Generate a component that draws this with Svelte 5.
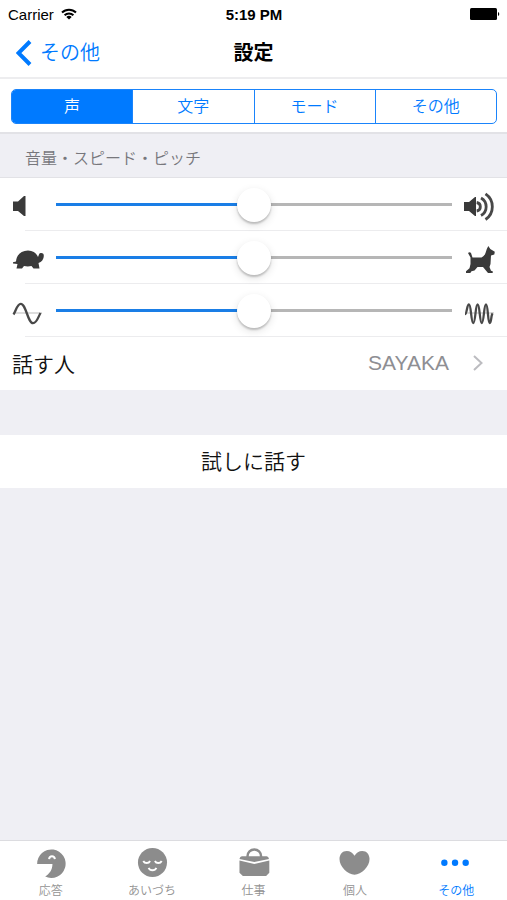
<script lang="ts">
	const segments = ["声", "文字", "モード", "その他"];

	const tabs = [
		{ icon: "reply", label: "応答" },
		{ icon: "nod", label: "あいづち" },
		{ icon: "work", label: "仕事" },
		{ icon: "heart", label: "個人" },
		{ icon: "more", label: "その他" },
	];

	let sliders = $state([
		{ id: "volume", label: "音量", value: 50 },
		{ id: "speed", label: "スピード", value: 50 },
		{ id: "pitch", label: "ピッチ", value: 50 },
	]);
	let activeSegment = $state(0);
	let activeTab = $state(4);
</script>

{#snippet lowIcon(id: string)}
	<svg class="rowIcon" viewBox="0 0 32 32" aria-hidden="true">
		{#if id == "volume"}
			<path d="M1 12.500h5l6-5.500h1.500v20H12l-6-5H1z" />
		{:else if id == "speed"}
			<path
				d="M1 20.300l3-.8C4.500 13 9 8.500 16 8.500c5 0 8.500 2.500 10 6.500l1.200-3c.8-1.500 4.600-1.500 4.600 1.500 0 4-2.300 6.500-5.300 7.500l1 5.500h-6l-2-2.500c-2.500.6-5 .6-7.500 0l-2 2.500H4.500l1-4.500-4.500-.6z"
			/>
		{:else}
			<path class="axis" d="M1 18h29" />
			<path
				class="line"
				d="M1.500 19.500C4 16 5 8.800 8.800 8.800c5.200 0 7 19.400 12.200 19.400 4 0 5-6 7.500-10.200"
			/>
		{/if}
	</svg>
{/snippet}

{#snippet highIcon(id: string)}
	<svg class="rowIcon" viewBox="0 0 32 32" aria-hidden="true">
		{#if id == "volume"}
			<path d="M0 13h5l6-5h1v19h-1l-6-5H0z" />
			<path
				class="line thick"
				d="M12.700 13.500a4.300 4.300 0 0 1 0 8.500M17 9a10 10 0 0 1 0 17.500M21.500 4.800a15.500 15.500 0 0 1 0 25.700"
			/>
		{:else if id == "speed"}
			<path
				d="M4 11q1.700-1.300 3 0l1.500 4.500H17.500q3-1.500 4-4.500l1.300-4L24.300 4l2 3 4.500 2.800-.5 2.700-3.300 1-.5 8.400-1 3 1.500 3.800 1.700.6v1.700H24L19 25H13.500L10.500 28.500l-3 .8-1.200 1.700H2v-1.700l3.500-3 1-4.300V15.500z"
			/>
		{:else}
			<path class="axis" d="M1 18h29" />
			<path
				class="line"
				d="M1 19c2 0 1.800-9.500 4-9.500s2 18.500 4.300 18.500 2-18.500 4.300-18.500 2 18.500 4.200 18.500 2-18.500 4.200-18.500 1.700 18.500 3.700 18.500 1-8 3-9.500"
			/>
		{/if}
	</svg>
{/snippet}

{#snippet tabIcon(icon: string)}
	<svg class="tabIcon" viewBox="0 0 32 32" aria-hidden="true">
		{#if icon == "reply"}
			<path d="M1.700 17.500A14.700 14.700 0 1 1 10 30.500c4.500-3 7.500-7 7.500-13z" />
			<path class="cut" d="M14 12.500c.5-4 5.500-4 6 0" />
		{:else if icon == "nod"}
			<circle cx="16.500" cy="16" r="15" />
			<path
				class="cut"
				d="M7 14.500c1.500 2.800 5.500 2.800 7 0M19 14.500c1.500 2.800 5.500 2.800 7 0M12.500 21.500c1.500 3.400 6.500 3.400 8 0"
			/>
		{:else if icon == "work"}
			<path class="handle" d="M9.300 11.500V9.500a7 7 0 0 1 14 0v2" />
			<path d="M3.500 9.500h25.500q2 0 2.500 2.800L16.300 15.500 1 12.300q.5-2.800 2.500-2.800z" />
			<path d="M1 14l15.300 3.500L31.800 14v12.500L28.500 30h-24L1 26.500z" />
		{:else if icon == "heart"}
			<path
				d="M15.500 9C17.500 5.500 20 4 23.500 4 28 4 31 7.500 31 12.500c0 8-8.500 16.200-15.500 16.200S0 20.500 0 12.500C0 7.500 3 4 7.500 4c3.500 0 6 1.500 8 5z"
			/>
		{:else}
			<circle cx="4" cy="16.300" r="3.300" />
			<circle cx="15" cy="16.300" r="3.300" />
			<circle cx="26" cy="16.300" r="3.300" />
		{/if}
	</svg>
{/snippet}

<div class="screen">
	<div class="statusBar">
		<div class="carrier">
			<span>Carrier</span>
			<svg class="wifi" viewBox="0 0 16 12" aria-hidden="true">
				<path d="M1 4.500a10 10 0 0 1 14 0M3.600 7.300a6.300 6.300 0 0 1 8.800 0" />
				<path class="dot" d="M8 11.500L5.300 8.900a4 4 0 0 1 5.400 0z" />
			</svg>
		</div>
		<span class="clock">5:19 PM</span>
		<svg class="battery" viewBox="0 0 30 12" aria-hidden="true">
			<rect width="27" height="12" rx="1.500" />
			<path d="M28 4a2.200 2.200 0 0 1 0 4z" />
		</svg>
	</div>

	<header class="navBar">
		<button class="back">
			<svg viewBox="0 0 16 26" aria-hidden="true">
				<path d="M14 1.500L2.500 13 14 24.500" />
			</svg>
			その他
		</button>
		<h1>設定</h1>
	</header>

	<div class="segmentBar">
		<div class="segments">
			{#each segments as segment, index}
				<button
					class:selected={activeSegment == index}
					onclick={() => (activeSegment = index)}>{segment}</button
				>
			{/each}
		</div>
	</div>

	<main>
		<h2>音量・スピード・ピッチ</h2>
		<div class="group">
			{#each sliders as slider}
				<label class="row" for={slider.id} aria-label={slider.label}>
					{@render lowIcon(slider.id)}
					<input
						id={slider.id}
						type="range"
						min="0"
						max="100"
						aria-label={slider.label}
						bind:value={slider.value}
						style:--fill="{slider.value}%"
					/>
					{@render highIcon(slider.id)}
				</label>
			{/each}
			<button class="row speaker">
				<span>話す人</span>
				<span class="speakerName">SAYAKA</span>
				<svg class="chevron" viewBox="0 0 10 16" aria-hidden="true">
					<path d="M1 1l7.500 7L1 15" />
				</svg>
			</button>
		</div>
		<button class="tryButton">試しに話す</button>
	</main>

	<nav class="tabBar">
		{#each tabs as tab, index}
			<button
				class:active={activeTab == index}
				onclick={() => (activeTab = index)}
			>
				{@render tabIcon(tab.icon)}
				<span>{tab.label}</span>
			</button>
		{/each}
	</nav>
</div>

<style>
	:global(body) {
		margin: 0;
		background: #efeff4;
	}

	.screen {
		min-height: 100vh;
		display: flex;
		flex-direction: column;
		background: #efeff4;
		color: #111;
		font-family: "Liberation Sans", "Noto Sans CJK JP", sans-serif;
		font-weight: 350;
	}

	button {
		margin: 0;
		padding: 0;
		border: 0;
		background: none;
		color: inherit;
		font: inherit;
		cursor: pointer;
	}

	.statusBar {
		height: 28px;
		padding: 0 7px 0 8px;
		display: grid;
		grid-template-columns: 1fr auto 1fr;
		align-items: center;
		background: #fff;
		font-size: 15px;
		color: #000;
	}

	.carrier {
		display: flex;
		align-items: center;
		gap: 7px;
	}

	.wifi {
		width: 16px;
		height: 12px;
		fill: none;
		stroke: #000;
		stroke-width: 2;
	}

	.wifi .dot {
		fill: #000;
		stroke: none;
	}

	.clock {
		font-weight: bold;
	}

	.battery {
		width: 30px;
		height: 12px;
		justify-self: end;
	}

	.navBar {
		height: 51px;
		padding: 0 16px;
		display: grid;
		grid-template-columns: 1fr auto 1fr;
		align-items: center;
		background: #fff;
		border-bottom: 2px solid #ededef;
		box-sizing: border-box;
	}

	.back {
		display: flex;
		align-items: center;
		gap: 8px;
		font-size: 20px;
		line-height: 28px;
		color: #007aff;
	}

	.back svg {
		width: 16px;
		height: 26px;
		fill: none;
		stroke: #007aff;
		stroke-width: 4;
	}

	h1 {
		margin: 0;
		font-size: 20px;
		line-height: 28px;
		color: #000;
	}

	.segmentBar {
		padding: 10px 10px 8px 11px;
		background: #fff;
		border-bottom: 2px solid #e2e2e6;
	}

	.segments {
		display: flex;
		height: 35px;
		border: 1px solid #1a84fb;
		border-radius: 5px;
		overflow: hidden;
		box-sizing: border-box;
	}

	.segments button {
		flex: 1;
		padding-bottom: 3px;
		font-size: 16px;
		color: #007aff;
	}

	.segments button + button {
		border-left: 1px solid #1a84fb;
	}

	.segments .selected {
		background: #007aff;
		color: #fff;
	}

	h2 {
		margin: 0;
		padding: 13px 25px 6px;
		font-size: 16px;
		font-weight: 350;
		line-height: 24px;
		color: #77777c;
		border-bottom: 1px solid #e2e2e6;
	}

	.row {
		width: 100%;
		height: 53px;
		padding: 0 11px 0 12px;
		display: flex;
		align-items: center;
		gap: 12px;
		box-sizing: border-box;
		background: linear-gradient(#ececee, #ececee) 25px 100% / 100% 1px
			no-repeat #fff;
	}

	.rowIcon {
		width: 32px;
		height: 32px;
		flex: none;
		fill: #3a3a3a;
	}

	.rowIcon .line {
		fill: none;
		stroke: #484848;
		stroke-width: 2.300;
	}

	.rowIcon .thick {
		stroke-width: 2.800;
	}

	.rowIcon .axis {
		stroke: #bbb;
		stroke-width: 1;
	}

	input {
		flex: 1;
		min-width: 0;
		height: 34px;
		margin: 0;
		appearance: none;
		background: linear-gradient(
				to right,
				#1a7ee6 var(--fill),
				#b6b6b6 var(--fill)
			)
			center / 100% 3px no-repeat;
	}

	input::-webkit-slider-thumb {
		appearance: none;
		width: 34px;
		height: 34px;
		border-radius: 50%;
		background: #fff;
		box-shadow:
			0 2px 2px rgba(0, 0, 0, 0.2),
			0 3px 8px rgba(0, 0, 0, 0.12);
	}

	.speaker {
		padding: 0 24px 2px 12px;
		background: #fff;
		font-size: 21px;
	}

	.speakerName {
		margin-left: auto;
		color: #8e8e93;
	}

	.chevron {
		width: 10px;
		height: 16px;
		margin-left: 12px;
		fill: none;
		stroke: #bcbcc0;
		stroke-width: 2;
	}

	.tryButton {
		width: 100%;
		height: 53px;
		margin-top: 45px;
		padding-bottom: 3px;
		background: #fff;
		font-size: 21px;
	}

	.tabBar {
		margin-top: auto;
		height: 60px;
		display: flex;
		background: #fff;
		border-top: 1px solid #dcdce0;
		box-sizing: border-box;
	}

	.tabBar button {
		flex: 1;
		display: flex;
		flex-direction: column;
		align-items: center;
		padding-top: 6px;
		gap: 4px;
		font-size: 12px;
		line-height: 18px;
		color: #929292;
	}

	.tabIcon {
		width: 32px;
		height: 32px;
		fill: #8c8c8c;
	}

	.tabIcon .cut {
		fill: none;
		stroke: #fff;
		stroke-width: 2;
	}

	.tabIcon .handle {
		fill: none;
		stroke: #8c8c8c;
		stroke-width: 2.500;
	}

	.tabBar .active,
	.active .tabIcon {
		color: #007aff;
		fill: #007aff;
	}
</style>
